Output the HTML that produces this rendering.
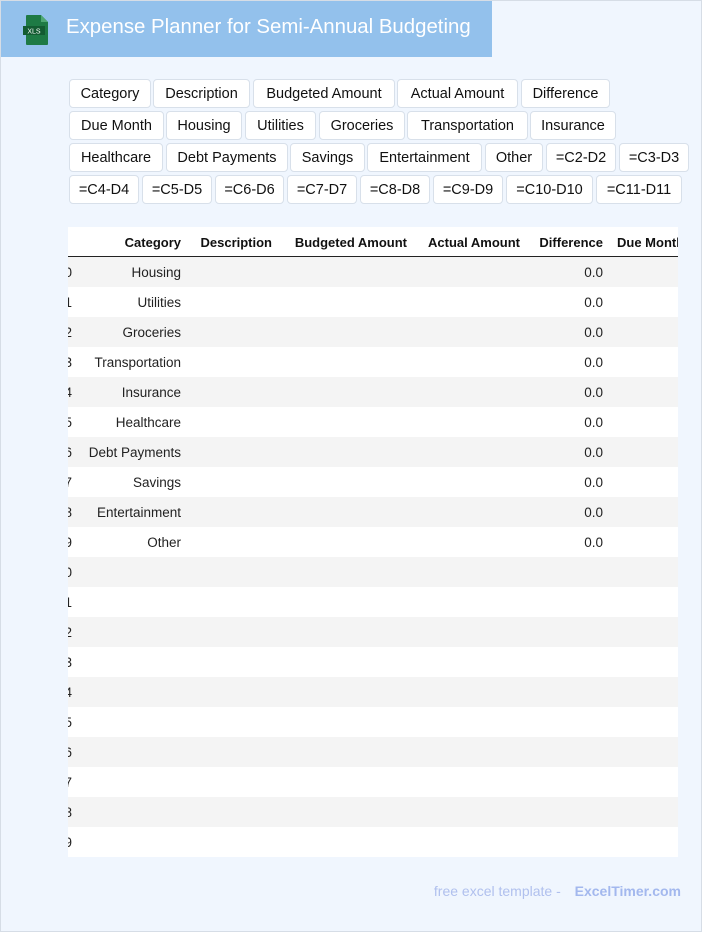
<!DOCTYPE html>
<html><head><meta charset="utf-8"><style>
*{box-sizing:border-box;margin:0;padding:0}
html,body{width:702px;height:932px}
body{background:#f0f6fe;font-family:"Liberation Sans",sans-serif;position:relative;overflow:hidden}
.frame{position:absolute;left:0;top:0;width:702px;height:932px;border:1px solid #d6dde6;pointer-events:none}
.hdr{position:absolute;left:1px;top:1px;width:491px;height:56px;background:#93c1ec}
.hdr .t{position:absolute;left:65px;top:15px;color:#fff;font-size:20.4px}
.b{position:absolute;height:29px;background:#fff;border:1px solid #d8e0ea;border-radius:4px;font-size:14.5px;color:#111;display:flex;align-items:center;justify-content:center;white-space:nowrap}
.tbl{position:absolute;left:68px;top:227px;width:610px;height:630px;background:#fff;overflow:hidden}
.row{position:absolute;left:0;width:610px;height:30px;font-size:13.5px;color:#222}
.row.g{background:#f4f4f4}
.c{position:absolute;top:8px;white-space:nowrap}
.hd{font-weight:bold;color:#111;border-bottom:1px solid #222;height:30px;font-size:13px}
.foot{position:absolute;top:883px;right:21px;font-size:14px;color:#b0c0ee}
.foot b{color:#a3b8ee;margin-left:10px}
</style></head><body>
<div class="hdr">
<svg style="position:absolute;left:21px;top:13px" width="30" height="32" viewBox="0 0 30 32"><path d="M5 1h14l7 7v22a1 1 0 0 1-1 1H5a1 1 0 0 1-1-1V2a1 1 0 0 1 1-1z" fill="#1e7a45"/><path d="M19 1v7h7z" fill="#4ea873"/><rect x="1" y="12" width="22" height="9" fill="#135c32"/><text x="12" y="19.5" font-family="Liberation Sans" font-size="7" fill="#fff" text-anchor="middle">XLS</text></svg>
<div class="t">Expense Planner for Semi-Annual Budgeting</div>
</div>

<div class="b" style="left:69px;top:79px;width:82px">Category</div>
<div class="b" style="left:153px;top:79px;width:97px">Description</div>
<div class="b" style="left:253px;top:79px;width:142px">Budgeted Amount</div>
<div class="b" style="left:397px;top:79px;width:121px">Actual Amount</div>
<div class="b" style="left:521px;top:79px;width:89px">Difference</div>

<div class="b" style="left:69px;top:111px;width:95px">Due Month</div>
<div class="b" style="left:166px;top:111px;width:76px">Housing</div>
<div class="b" style="left:245px;top:111px;width:71px">Utilities</div>
<div class="b" style="left:319px;top:111px;width:86px">Groceries</div>
<div class="b" style="left:407px;top:111px;width:121px">Transportation</div>
<div class="b" style="left:530px;top:111px;width:86px">Insurance</div>

<div class="b" style="left:69px;top:143px;width:94px">Healthcare</div>
<div class="b" style="left:166px;top:143px;width:122px">Debt Payments</div>
<div class="b" style="left:290px;top:143px;width:75px">Savings</div>
<div class="b" style="left:367px;top:143px;width:115px">Entertainment</div>
<div class="b" style="left:485px;top:143px;width:58px">Other</div>
<div class="b" style="left:546px;top:143px;width:70px">=C2-D2</div>
<div class="b" style="left:619px;top:143px;width:70px">=C3-D3</div>

<div class="b" style="left:69px;top:175px;width:70px">=C4-D4</div>
<div class="b" style="left:142px;top:175px;width:70px">=C5-D5</div>
<div class="b" style="left:215px;top:175px;width:69px">=C6-D6</div>
<div class="b" style="left:287px;top:175px;width:70px">=C7-D7</div>
<div class="b" style="left:360px;top:175px;width:70px">=C8-D8</div>
<div class="b" style="left:433px;top:175px;width:70px">=C9-D9</div>
<div class="b" style="left:506px;top:175px;width:87px">=C10-D10</div>
<div class="b" style="left:596px;top:175px;width:86px">=C11-D11</div>

<div class="tbl">
<div class="row hd" style="top:0">
<span class="c" style="right:497px">Category</span>
<span class="c" style="right:406px">Description</span>
<span class="c" style="right:271px">Budgeted Amount</span>
<span class="c" style="right:158px">Actual Amount</span>
<span class="c" style="right:75px">Difference</span>
<span class="c" style="left:549px">Due Month</span>
</div>
<div class="row g" style="top:30px"><span class="c" style="right:606px">0</span><span class="c" style="right:497px">Housing</span><span class="c" style="right:75px">0.0</span></div>
<div class="row" style="top:60px"><span class="c" style="right:606px">1</span><span class="c" style="right:497px">Utilities</span><span class="c" style="right:75px">0.0</span></div>
<div class="row g" style="top:90px"><span class="c" style="right:606px">2</span><span class="c" style="right:497px">Groceries</span><span class="c" style="right:75px">0.0</span></div>
<div class="row" style="top:120px"><span class="c" style="right:606px">3</span><span class="c" style="right:497px">Transportation</span><span class="c" style="right:75px">0.0</span></div>
<div class="row g" style="top:150px"><span class="c" style="right:606px">4</span><span class="c" style="right:497px">Insurance</span><span class="c" style="right:75px">0.0</span></div>
<div class="row" style="top:180px"><span class="c" style="right:606px">5</span><span class="c" style="right:497px">Healthcare</span><span class="c" style="right:75px">0.0</span></div>
<div class="row g" style="top:210px"><span class="c" style="right:606px">6</span><span class="c" style="right:497px">Debt Payments</span><span class="c" style="right:75px">0.0</span></div>
<div class="row" style="top:240px"><span class="c" style="right:606px">7</span><span class="c" style="right:497px">Savings</span><span class="c" style="right:75px">0.0</span></div>
<div class="row g" style="top:270px"><span class="c" style="right:606px">8</span><span class="c" style="right:497px">Entertainment</span><span class="c" style="right:75px">0.0</span></div>
<div class="row" style="top:300px"><span class="c" style="right:606px">9</span><span class="c" style="right:497px">Other</span><span class="c" style="right:75px">0.0</span></div>
<div class="row g" style="top:330px"><span class="c" style="right:606px">0</span></div>
<div class="row" style="top:360px"><span class="c" style="right:606px">1</span></div>
<div class="row g" style="top:390px"><span class="c" style="right:606px">2</span></div>
<div class="row" style="top:420px"><span class="c" style="right:606px">3</span></div>
<div class="row g" style="top:450px"><span class="c" style="right:606px">4</span></div>
<div class="row" style="top:480px"><span class="c" style="right:606px">5</span></div>
<div class="row g" style="top:510px"><span class="c" style="right:606px">6</span></div>
<div class="row" style="top:540px"><span class="c" style="right:606px">7</span></div>
<div class="row g" style="top:570px"><span class="c" style="right:606px">8</span></div>
<div class="row" style="top:600px"><span class="c" style="right:606px">9</span></div>
</div>

<div class="foot">free excel template - <b>ExcelTimer.com</b></div>
<div class="frame"></div>
</body></html>
